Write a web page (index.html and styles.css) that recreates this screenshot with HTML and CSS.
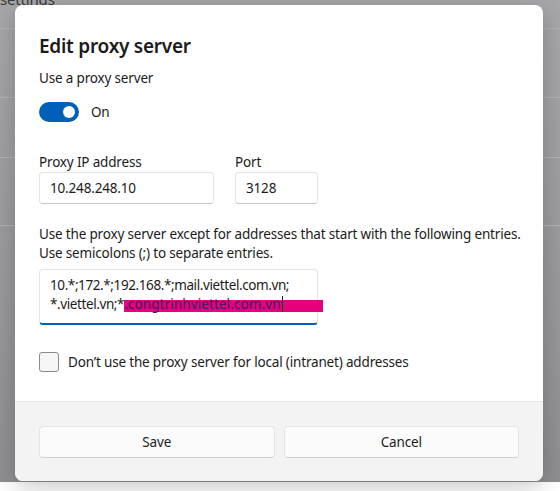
FILE: index.html
```html
<!DOCTYPE html>
<html>
<head>
<meta charset="utf-8">
<link rel="stylesheet" href="styles.css">
</head>
<body>
<div class="backdrop">
  <div class="bg-title">settings</div>
  <div class="bg-row r1"></div>
  <div class="bg-row r2"></div>
  <div class="bg-row r3"></div>
  <div class="bg-row r4"></div>
</div>
<div class="dialog">
  <div class="body">
    <h1 class="title">Edit proxy server</h1>
    <div class="label">Use a proxy server</div>
    <div class="toggle-row">
      <span class="toggle"><span class="knob"></span></span>
      <span class="toggle-text">On</span>
    </div>
    <div class="fields">
      <div class="field">
        <div class="label">Proxy IP address</div>
        <div class="input ip">10.248.248.10</div>
      </div>
      <div class="field">
        <div class="label">Port</div>
        <div class="input port">3128</div>
      </div>
    </div>
    <p class="desc">Use the proxy server except for addresses that start with the following entries.<br>Use semicolons (;) to separate entries.</p>
    <div class="textarea">10.*;172.*;192.168.*;mail.viettel.com.vn;<br>*.viettel.vn;*<span class="hl">.congtrinhviettel.com.vn<span class="caret"></span></span></div>
    <div class="check-row">
      <span class="checkbox"></span>
      <span class="check-text">Don’t use the proxy server for local (intranet) addresses</span>
    </div>
  </div>
  <div class="footer">
    <button class="btn">Save</button>
    <button class="btn">Cancel</button>
  </div>
</div>
</body>
</html>
```

FILE: styles.css
```css
html, body {
  margin: 0;
  padding: 0;
}
body {
  width: 560px;
  height: 491px;
  overflow: hidden;
  position: relative;
  font-family: "Noto Sans", "Open Sans", sans-serif;
  color: #1b1b1b;
  letter-spacing: -0.17px;
}
.backdrop {
  height: 491px;
  background: linear-gradient(180deg, #a8a8aa 0%, #9d9d9f 45%, #8f8f92 100%);
}
.bg-title {
  font-size: 15px;
  line-height: 16px;
  margin-top: -9px;
  color: #3a3a3a;
  height: 8px;
  overflow: visible;
}
.bg-row {
  border-bottom: 1px solid #b3b3b5;
}
.r1 { height: 29px; }
.r2 { height: 68px; }
.r3 { height: 59px; }
.r4 { height: 67px; }

.dialog {
  position: absolute;
  left: 15px;
  top: 5px;
  width: 528px;
  height: 476px;
  background: #fff;
  border-radius: 8px;
  overflow: hidden;
  display: flex;
  flex-direction: column;
  box-shadow: 0 6px 24px rgba(0,0,0,0.22);
}
.body {
  flex: 1;
  padding: 27px 24px 0 24px;
}
.title {
  margin: 0;
  font-size: 19px;
  line-height: 28px;
  font-weight: 600;
  letter-spacing: -0.25px;
}
.label {
  font-size: 13.5px;
  line-height: 20px;
}
.body > .label {
  margin-top: 8px;
}
.toggle-row {
  margin-top: 14px;
  display: flex;
  align-items: center;
  height: 20px;
}
.toggle {
  width: 40px;
  height: 20px;
  border-radius: 10px;
  background: #005fb8;
  display: flex;
  align-items: center;
  justify-content: flex-end;
  padding-right: 4px;
  box-sizing: border-box;
}
.knob {
  width: 12px;
  height: 12px;
  border-radius: 50%;
  background: #fff;
}
.toggle-text {
  margin-left: 12px;
  font-size: 13.5px;
}
.fields {
  margin-top: 30px;
  display: flex;
  gap: 21px;
}
.input {
  box-sizing: border-box;
  height: 32px;
  border: 1px solid #e4e4e4;
  border-bottom-color: #c6c6c6;
  border-radius: 4px;
  font-size: 13.5px;
  line-height: 30px;
  padding: 0 10px;
  background: #fff;
}
.ip { width: 175px; }
.port { width: 83px; }
.desc {
  margin: 21px 0 0 0;
  font-size: 13.5px;
  line-height: 19px;
  white-space: nowrap;
}
.textarea {
  margin-top: 6px;
  width: 279px;
  box-sizing: border-box;
  height: 56px;
  border: 1px solid #e4e4e4;
  border-bottom: 2px solid #005fb8;
  border-radius: 4px;
  padding: 6px 10px 0 10px;
  font-size: 13.5px;
  line-height: 19px;
  letter-spacing: -0.4px;
  white-space: nowrap;
  overflow: visible;
}
.hl {
  display: inline-block;
  width: 199px;
  letter-spacing: 0.1px;
  color: #3d1f5c;
  background: linear-gradient(#e5007e, #e5007e) no-repeat;
  background-size: 100% 12px;
  background-position: 0 calc(100% - 2px);
}
.caret {
  display: inline-block;
  width: 1px;
  height: 16px;
  background: #222;
  vertical-align: -3px;
  margin-left: 1px;
}
.check-row {
  margin-top: 27px;
  display: flex;
  align-items: center;
}
.checkbox {
  width: 20px;
  height: 20px;
  box-sizing: border-box;
  border: 1px solid #8b8b8b;
  border-radius: 3px;
  background: #f6f6f6;
}
.check-text {
  margin-left: 9px;
  font-size: 13.5px;
}
.footer {
  height: 80px;
  box-sizing: border-box;
  background: #f3f3f3;
  border-top: 1px solid #e5e5e5;
  padding: 24px 24px 0 24px;
  display: flex;
  gap: 9px;
}
.btn {
  flex: 1;
  height: 32px;
  background: #fbfbfb;
  border: 1px solid #e5e5e5;
  border-bottom-color: #cfcfcf;
  border-radius: 4px;
  font-family: "Noto Sans", "Open Sans", sans-serif;
  font-size: 13.5px;
  letter-spacing: -0.17px;
  color: #1b1b1b;
  padding: 0;
}
```
